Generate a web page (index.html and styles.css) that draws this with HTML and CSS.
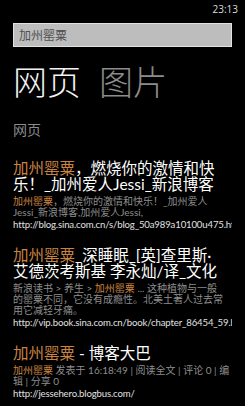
FILE: index.html
```html
<!DOCTYPE html>
<html lang="zh-CN">
<head>
<meta charset="utf-8">
<link rel="stylesheet" href="styles.css">
</head>
<body>
<div class="phone">
  <div class="status"><span class="time">23:13</span></div>
  <div class="search"><span class="query">加州罂粟</span></div>
  <div class="pivot">
    <span class="pivot-item active">网页</span>
    <span class="pivot-item">图片</span>
  </div>
  <div class="section">网页</div>
  <div class="results">
    <div class="result">
      <div class="title"><span class="hl">加州罂粟</span>，燃烧你的激情和快乐！_加州爱人Jessi_新浪博客</div>
      <div class="snippet"><span class="hl">加州罂粟</span>，燃烧你的激情和快乐！_加州爱人Jessi_新浪博客,加州爱人Jessi,</div>
      <div class="url">http://blog.sina.com.cn/s/blog_50a989a10100u475.html</div>
    </div>
    <div class="result">
      <div class="title"><span class="hl">加州罂粟</span>_深睡眠_[英]查里斯·<br>艾德茨考斯基 李永灿/译_文化</div>
      <div class="snippet">新浪读书 &gt; 养生 &gt; <span class="hl">加州罂粟</span> ... 这种植物与一般<br>的罂粟不同，它没有成瘾性。北美土著人过去常<br>用它减轻牙痛。</div>
      <div class="url">http://vip.book.sina.com.cn/book/chapter_86454_59.html</div>
    </div>
    <div class="result">
      <div class="title"><span class="hl">加州罂粟</span> - 博客大巴</div>
      <div class="snippet"><span class="hl">加州罂粟</span> 发表于 16:18:49 | 阅读全文 | 评论 0 | 编辑 | 分享 0</div>
      <div class="url">http://jessehero.blogbus.com/</div>
    </div>
  </div>
</div>
</body>
</html>
```
FILE: styles.css
```css
html, body {
  margin: 0;
  padding: 0;
  background: #000;
}
.phone {
  width: 245px;
  height: 406px;
  overflow: hidden;
  background: #000;
  font-family: Lato, "Noto Sans CJK SC", sans-serif;
  color: #fff;
}
.status {
  height: 20px;
  display: flex;
  justify-content: flex-end;
  align-items: center;
  padding-right: 7px;
}
.time {
  font-family: "Open Sans", sans-serif;
  font-size: 10px;
  color: #dcdcdc;
  line-height: 10px;
  margin-top: -2px;
}
.search {
  margin: 3px 13px 0 13px;
  height: 22px;
  background: #bdbdbd;
  border: 1px solid #e2e2e2;
  display: flex;
  align-items: center;
  padding-left: 5px;
}
.query {
  font-family: "Noto Sans CJK SC", sans-serif;
  font-size: 12px;
  line-height: 12px;
  color: #4f4f4f;
}
.pivot {
  margin-top: 17px;
  padding-left: 13px;
  display: flex;
  gap: 18px;
  font-family: "Noto Sans CJK SC", sans-serif;
  font-size: 34px;
  line-height: 34px;
  font-weight: 300;
}
.pivot-item {
  color: #8c8c8c;
}
.pivot-item.active {
  color: #f2f2f2;
}
.section {
  margin-top: 24px;
  padding-left: 13px;
  font-family: "Noto Sans CJK SC", sans-serif;
  font-size: 14px;
  line-height: 14px;
  color: #8a8a8a;
}
.results {
  margin-top: 24px;
  padding: 0 13px;
  display: flex;
  flex-direction: column;
  gap: 17px;
}
.result {
  display: flex;
  flex-direction: column;
}
.title {
  font-size: 15.5px;
  line-height: 16px;
  color: #fff;
}
.hl {
  color: #c98443;
}
.snippet {
  margin-top: 4px;
  font-size: 10px;
  line-height: 11px;
  color: #8e8e8e;
}
.url {
  margin-top: 1px;
  font-size: 9.6px;
  letter-spacing: -0.15px;
  line-height: 11px;
  color: #e0e0e0;
  white-space: nowrap;
  overflow: hidden;
}
```
